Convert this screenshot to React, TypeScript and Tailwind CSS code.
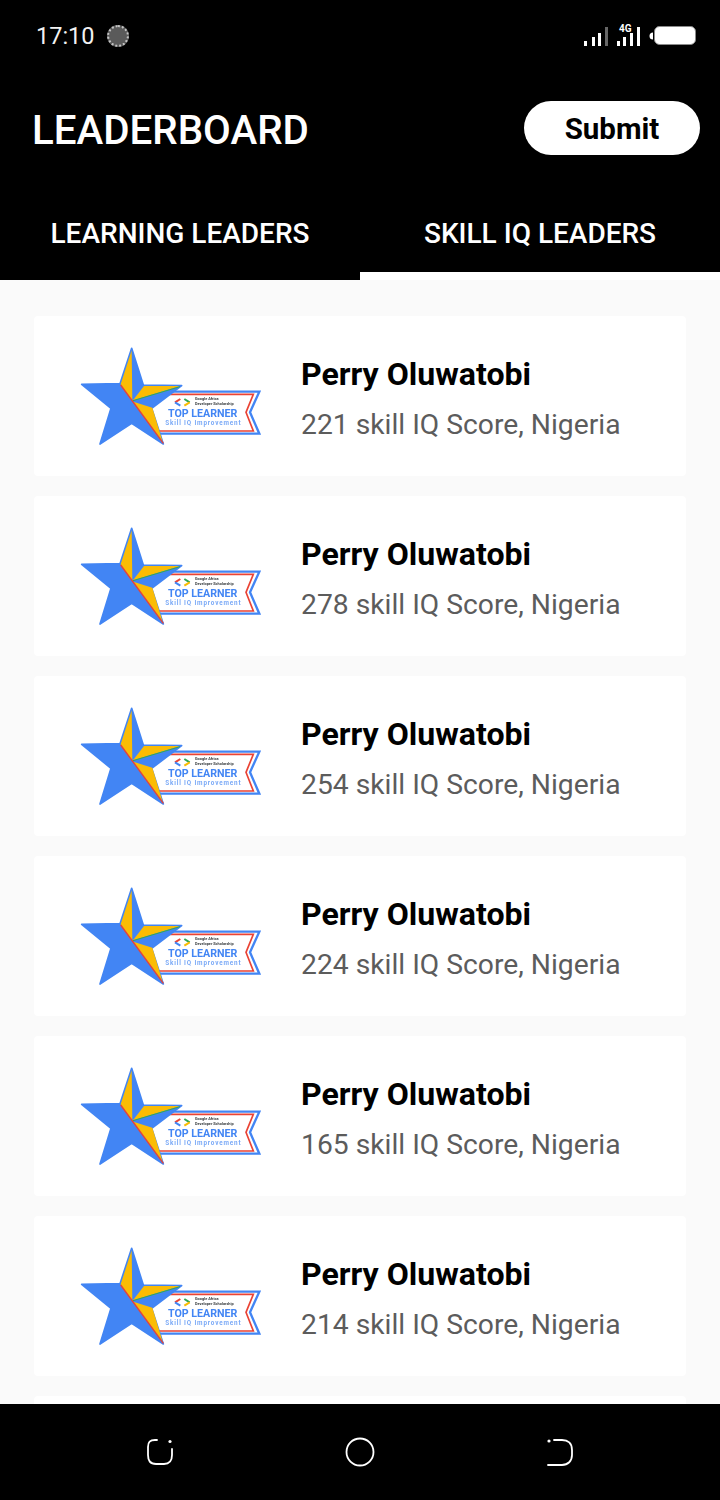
import React from 'react';

const scores = [221, 278, 254, 224, 165, 214];

// badge drawn in 3x coordinates: 200x120 on screen
function Badge() {
  return (
    <svg width="200" height="120" viewBox="0 0 600 360" className="block blur-[0.4px]">
      {/* ribbon sits under the star */}
      <polygon points="240,170 568,170 540,232 568,296 240,296" fill="#ffffff" />
      <polyline points="285,178 550,178 528,232 550,288 262,288" fill="none" stroke="#ea4335" strokeWidth="5" />
      <polyline points="290,170 568,170 540,232 568,296 262,296" fill="none" stroke="#4285f4" strokeWidth="7" />
      {/* star */}
      <polygon points="185,40 220,150 335,152 245,220 280,327 185,265 90,327 123,220 35,148 150,146" fill="#4285f4" stroke="#4285f4" strokeWidth="5" strokeLinejoin="round" />
      <polygon points="185,46 152,148 187,197" fill="#fbbc04" />
      <polygon points="222,153 330,153 189,196" fill="#fbbc04" />
      <line x1="189" y1="197" x2="330" y2="155" stroke="#34a853" strokeWidth="3" />
      <polygon points="190,200 247,218 278,320" fill="#fbbc04" />
      <line x1="152" y1="150" x2="280" y2="325" stroke="#ea4335" strokeWidth="4" />
      {/* ribbon text */}
      <path d="M331 192 L315 202" fill="none" stroke="#ea4335" strokeWidth="6" />
      <path d="M315 202 L331 212" fill="none" stroke="#4285f4" strokeWidth="6" />
      <path d="M343 192 L359 202" fill="none" stroke="#34a853" strokeWidth="6" />
      <path d="M359 202 L343 212" fill="none" stroke="#fbbc04" strokeWidth="6" />
      <text x="375" y="196" fontSize="11.5" fontWeight="700" fill="#3c4043" fontFamily="Roboto, sans-serif">Google Africa</text>
      <text x="375" y="211" fontSize="11.5" fontWeight="700" fill="#3c4043" fontFamily="Roboto, sans-serif">Developer Scholarship</text>
      <text x="398" y="247" fontSize="32" fontWeight="700" textAnchor="middle" fill="#4285f4" fontFamily="Roboto, sans-serif">TOP LEARNER</text>
      <text x="400" y="269" fontSize="19" fontWeight="700" letterSpacing="2.5" textAnchor="middle" fill="#7baaf7" fontFamily="Roboto, sans-serif">Skill IQ Improvement</text>
    </svg>
  );
}

function LeaderCard({ score }: { score: number }) {
  return (
    <div className="flex h-40 shrink-0 items-center rounded-[4px] bg-white">
      <div className="mb-0.5 ml-9 w-[231px] shrink-0">
        <Badge />
      </div>
      <div className="pt-[7px]">
        <p className="text-[32.1px] leading-[38px] font-bold text-black">Perry Oluwatobi</p>
        <p className="mt-[13px] text-[28.25px] leading-[38px] text-[#5c5c5c]">{score} skill IQ Score, Nigeria</p>
      </div>
    </div>
  );
}

function StatusBar() {
  return (
    <div className="flex h-[72px] items-center justify-between pl-[36px] pr-[24px] text-white">
      <div className="flex items-center gap-[12px]">
        <span className="pt-0.5 text-[23.5px] text-[#f2f2f2]">17:10</span>
        <span className="block h-[22px] w-[22px] rounded-full border-2 border-dotted border-[#c4c4c4] bg-[#5a5a5a]" />
      </div>
      <svg width="112" height="26" viewBox="0 0 112 26" fill="#fff">
        <rect x="0" y="18" width="3" height="5" />
        <rect x="8" y="14" width="3" height="9" />
        <rect x="14" y="10" width="3" height="13" />
        <rect x="21" y="4" width="3" height="19" fill="#666" />
        <rect x="33" y="18" width="3" height="5" />
        <rect x="39" y="14" width="3" height="9" />
        <rect x="46" y="10" width="3" height="13" />
        <rect x="53" y="4" width="3" height="19" />
        <text x="35" y="9" fontSize="10" fontWeight="700" fontFamily="Roboto, sans-serif">4G</text>
        <path d="M69 9.5v7a3.5 3.5 0 0 1 0-7z" />
        <rect x="70.5" y="3.5" width="41" height="18" rx="5" stroke="#8a8a8a" strokeWidth="1" />
      </svg>
    </div>
  );
}

export default function App() {
  return (
    <div className="flex h-[1500px] w-[720px] flex-col overflow-hidden bg-[#fafafa] font-['Roboto',sans-serif]">
      {/* Header */}
      <header className="bg-black">
        <StatusBar />
        <div className="flex h-[115px] items-center justify-between pl-[32px] pr-5">
          <h1 className="pt-[3px] text-[40.3px] font-medium text-white">LEADERBOARD</h1>
          <button className="mb-[3px] h-[54px] w-[176px] rounded-full bg-white pt-[3px] text-[29.5px] font-bold text-black">Submit</button>
        </div>
        <div className="flex h-[93px]">
          <div className="flex w-1/2 items-center justify-center pt-px text-[28px] font-medium text-white">LEARNING LEADERS</div>
          <div className="flex w-1/2 items-center justify-center border-b-8 border-white pt-[9px] text-[28px] font-medium text-white">SKILL IQ LEADERS</div>
        </div>
      </header>

      {/* List */}
      <main className="flex min-h-0 flex-1 flex-col gap-5 overflow-hidden px-[34px] pt-9">
        {scores.map((score, i) => (
          <LeaderCard key={i} score={score} />
        ))}
        <div className="h-2 shrink-0 rounded-t-[4px] bg-white" />
      </main>

      {/* Android nav */}
      <nav className="flex h-24 shrink-0 items-center justify-center gap-[168px] bg-black">
        <svg width="32" height="32" viewBox="0 0 32 32" fill="none" stroke="#fff" strokeWidth="1.8" strokeLinecap="round">
          <path d="M13 4h-2C6 4 4 6 4 11v8c0 6 2 9 8 9h8c5 0 8-3 8-9v-6" />
          <circle cx="26" cy="5.5" r="1.6" fill="#fff" stroke="none" />
        </svg>
        <svg width="32" height="32" viewBox="0 0 32 32" fill="none" stroke="#fff" strokeWidth="1.8">
          <circle cx="16" cy="16" r="13.5" />
        </svg>
        <svg width="32" height="32" viewBox="0 0 32 32" fill="none" stroke="#fff" strokeWidth="1.8" strokeLinecap="round">
          <path d="M10 4h8c6 0 10 3 10 10v5c0 6-4 10-10 10H4" />
          <circle cx="5" cy="5" r="1.6" fill="#fff" stroke="none" />
        </svg>
      </nav>
    </div>
  );
}
